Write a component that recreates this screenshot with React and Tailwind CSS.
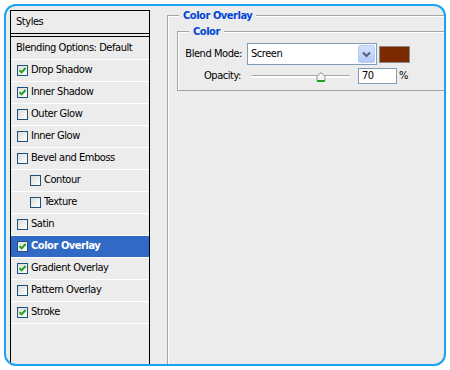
import React from "react";

const FONT = { fontFamily: 'Tahoma, "DejaVu Sans Condensed", "Liberation Sans", sans-serif' };

const items = [
  { label: "Drop Shadow", checked: true },
  { label: "Inner Shadow", checked: true },
  { label: "Outer Glow" },
  { label: "Inner Glow" },
  { label: "Bevel and Emboss" },
  { label: "Contour", indent: true },
  { label: "Texture", indent: true },
  { label: "Satin" },
  { label: "Color Overlay", checked: true, selected: true },
  { label: "Gradient Overlay", checked: true },
  { label: "Pattern Overlay" },
  { label: "Stroke", checked: true },
];

function Checkbox({ checked }) {
  return (
    <div className="w-[11px] h-[11px] border border-[#1c5180] bg-gradient-to-br from-[#dcdcd7] to-white flex items-center justify-center shrink-0">
      {checked && (
        <svg width="9" height="9" viewBox="0 0 9 9">
          <path d="M1.5 4.2 L3.6 6.4 L7.6 2" stroke="#21a121" strokeWidth="2" fill="none" />
        </svg>
      )}
    </div>
  );
}

export default function App() {
  return (
    <div className="w-[450px] h-[370px] bg-white pt-[4px] pl-[4px]" style={FONT}>
      <div className="w-[442px] h-[362px] border-2 border-[#1aa3f0] rounded-[12px] bg-[#ececec] overflow-hidden flex pt-[4px] pl-[4px] text-[11px] tracking-[-0.45px] text-black">
        {/* Left list */}
        <div className="w-[140px] shrink-0 border-t border-x border-black flex flex-col">
          <div className="h-[23px] border-b border-black flex items-center pl-[5px]">Styles</div>
          <div className="h-[24px] mt-[2px] border-t border-b border-black border-b-white flex items-center pl-[5px]">
            Blending Options: Default
          </div>
          {items.map((it) => (
            <div
              key={it.label}
              className={`h-[22px] border-b border-white flex items-center gap-[2px] ${it.indent ? "pl-[19px]" : "pl-[6px]"} ${it.selected ? "bg-[#316ac5] text-white font-bold" : ""}`}
            >
              <Checkbox checked={it.checked} />
              <span className="ml-[1px]">{it.label}</span>
            </div>
          ))}
        </div>

        {/* Right area */}
        <div className="flex-1 pl-[17px]">
          <fieldset className="w-[320px] h-[400px] border border-[#a5a5a0] shadow-[inset_1px_1px_0_#ffffff] pl-[9px] pr-0 pb-0 pt-0 m-0">
            <legend className="ml-[2px] px-[4px] leading-[11px] font-bold text-[#0046d5] bg-[#ececec]">Color Overlay</legend>
            <fieldset className="mt-[5px] w-[300px] border border-[#a5a5a0] shadow-[inset_1px_1px_0_#ffffff] p-0 pt-[6px] pb-[6px]">
              <legend className="ml-[11px] px-[4px] leading-[11px] font-bold text-[#0046d5] bg-[#ececec]">Color</legend>
              {/* Blend mode row */}
              <div className="flex items-center h-[22px]">
                <div className="w-[65px] text-right pr-[1px]">Blend Mode:</div>
                <div className="ml-[4px] w-[130px] h-[22px] border border-[#7f9db9] bg-white flex items-center justify-between pl-[3px] pr-[1px]">
                  <span>Screen</span>
                  <div className="w-[17px] h-[18px] rounded-[2px] border border-[#b9cbf3] bg-gradient-to-b from-[#d6e2fd] to-[#b2c8f8] flex items-center justify-center">
                    <svg width="9" height="7" viewBox="0 0 9 7">
                      <path d="M1 1.5 L4.5 5 L8 1.5" stroke="#4d6185" strokeWidth="2" fill="none" />
                    </svg>
                  </div>
                </div>
                <div className="ml-[2px] w-[31px] h-[17px] border border-[#8a8a8a] bg-[#7b2a00]" />
              </div>
              {/* Opacity row */}
              <div className="flex items-center h-[16px] mt-[3px]">
                <div className="w-[65px] text-right pr-[2px]">Opacity:</div>
                <div className="ml-[8px] w-[99px] h-[16px] relative flex items-center">
                  <div className="w-full h-[3px] rounded-full border-t border-[#a6a6a6] bg-white" />
                  <svg className="absolute left-[65px] top-[4px]" width="10" height="10" viewBox="0 0 10 10">
                    <path d="M1 4 L5 0.5 L9 4 L9 8.5 L1 8.5 Z" fill="#f4f4f0" stroke="#8a9a8a" strokeWidth="1" />
                    <rect x="1" y="8" width="8" height="2" fill="#21a121" />
                  </svg>
                </div>
                <div className="ml-[8px] w-[39px] h-[16px] border border-[#7f9db9] bg-white flex items-center pl-[3px]">70</div>
                <span className="ml-[2px]">%</span>
              </div>
            </fieldset>
          </fieldset>
        </div>
      </div>
    </div>
  );
}
